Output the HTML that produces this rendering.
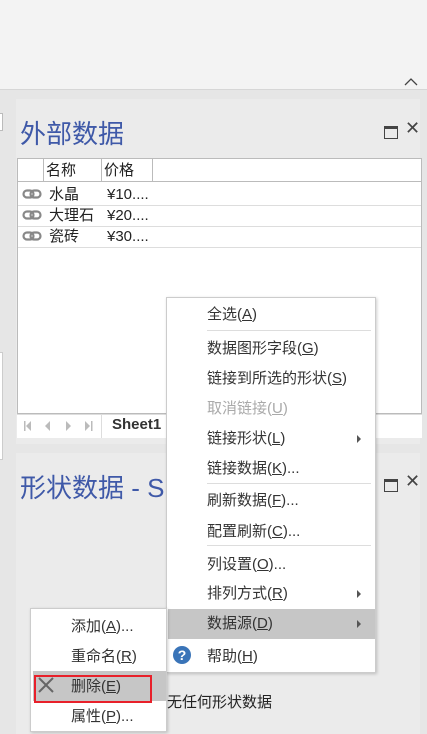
<!DOCTYPE html>
<html><head><meta charset="utf-8"><style>
*{margin:0;padding:0;box-sizing:border-box}
body{width:427px;height:734px;overflow:hidden;background:#e6e6e6;font-family:"Liberation Sans","Noto Sans CJK SC",sans-serif;position:relative;color:#222}
.a{position:absolute}
.t{font-size:15px;white-space:nowrap;line-height:20px}
u{text-decoration:underline}
.sep{position:absolute;left:40px;right:4px;height:1px;background:#ddd}
.arr{position:absolute;left:190px;width:0;height:0;border-left:4px solid #555;border-top:4px solid transparent;border-bottom:4px solid transparent}
</style></head><body>
<div class="a" style="left:0;top:0;width:427px;height:90px;background:#f3f3f3;border-bottom:1px solid #d6d6d6"></div>
<svg class="a" style="left:404px;top:77px" width="14" height="10"><path d="M1 8 L7 2 L13 8" fill="none" stroke="#444" stroke-width="1.3"/></svg>
<div class="a" style="left:0;top:113px;width:3px;height:18px;background:#fff;border:1px solid #bbb;border-left:none"></div>
<div class="a" style="left:0;top:352px;width:3px;height:108px;background:#fff;border:1px solid #ccc;border-left:none"></div>
<div class="a" style="left:16px;top:99px;width:404px;height:345px;background:#ebebeb"></div>
<div class="a" style="left:20px;top:116px;font-size:26px;color:#3f59a8;line-height:36px">外部数据</div>
<div class="a" style="left:384px;top:126px;width:14px;height:13px;border:1.5px solid #444;border-top-width:3px"></div>
<div class="a" style="left:405px;top:118px;font-size:18px;color:#444">✕</div>
<div class="a" style="left:17px;top:158px;width:405px;height:256px;background:#fff;border:1px solid #bbb"></div>
<div class="a" style="left:17px;top:181px;width:405px;height:1px;background:#bbb"></div>
<div class="a" style="left:43px;top:158px;width:1px;height:24px;background:#bbb"></div>
<div class="a" style="left:101px;top:158px;width:1px;height:24px;background:#bbb"></div>
<div class="a" style="left:152px;top:158px;width:1px;height:24px;background:#bbb"></div>
<div class="a t" style="left:46px;top:161px">名称</div>
<div class="a t" style="left:104px;top:161px">价格</div>
<div class="a" style="left:18px;top:205px;width:403px;height:1px;background:#ddd"></div>
<div class="a" style="left:18px;top:226px;width:403px;height:1px;background:#ddd"></div>
<div class="a" style="left:18px;top:247px;width:403px;height:1px;background:#ddd"></div>
<svg class="a" style="left:22px;top:189px" width="20" height="10"><rect x="1.5" y="1.5" width="10" height="7" rx="3.5" fill="none" stroke="#888" stroke-width="2.2"/><rect x="8.5" y="1.5" width="10" height="7" rx="3.5" fill="none" stroke="#888" stroke-width="2.2"/></svg>
<svg class="a" style="left:22px;top:210px" width="20" height="10"><rect x="1.5" y="1.5" width="10" height="7" rx="3.5" fill="none" stroke="#888" stroke-width="2.2"/><rect x="8.5" y="1.5" width="10" height="7" rx="3.5" fill="none" stroke="#888" stroke-width="2.2"/></svg>
<svg class="a" style="left:22px;top:231px" width="20" height="10"><rect x="1.5" y="1.5" width="10" height="7" rx="3.5" fill="none" stroke="#888" stroke-width="2.2"/><rect x="8.5" y="1.5" width="10" height="7" rx="3.5" fill="none" stroke="#888" stroke-width="2.2"/></svg>
<div class="a t" style="left:49px;top:185px">水晶</div><div class="a t" style="left:107px;top:185px">¥10....</div>
<div class="a t" style="left:49px;top:206px">大理石</div><div class="a t" style="left:107px;top:206px">¥20....</div>
<div class="a t" style="left:49px;top:227px">瓷砖</div><div class="a t" style="left:107px;top:227px">¥30....</div>
<div class="a" style="left:17px;top:414px;width:405px;height:24px;background:#fff;border-top:1px solid #ddd"></div>
<div class="a" style="left:101px;top:415px;width:1px;height:23px;background:#ddd"></div>
<svg class="a" style="left:22px;top:420px" width="76" height="12"><g fill="#bbb"><rect x="2" y="1" width="1.5" height="10"/><path d="M9 1L4 6L9 11Z"/><path d="M28 1L23 6L28 11Z"/><path d="M44 1L49 6L44 11Z"/><path d="M63 1L68 6L63 11Z"/><rect x="69" y="1" width="1.5" height="10"/></g></svg>
<div class="a" style="left:112px;top:416px;font-size:15px;font-weight:bold;color:#333">Sheet1</div>
<div class="a" style="left:16px;top:453px;width:404px;height:281px;background:#ebebeb"></div>
<div class="a" style="left:20px;top:470px;font-size:26px;color:#3f59a8;line-height:36px">形状数据 - S</div>
<div class="a" style="left:384px;top:479px;width:14px;height:13px;border:1.5px solid #444;border-top-width:3px"></div>
<div class="a" style="left:405px;top:471px;font-size:18px;color:#444">✕</div>
<div class="a t" style="left:167px;top:693px">无任何形状数据</div>
<div class="a" style="left:166px;top:297px;width:210px;height:376px;background:#fff;border:1px solid #ccc;box-shadow:1px 1px 3px rgba(0,0,0,.2);color:#333">
<div class="a t" style="left:40px;top:7px">全选(<u>A</u>)</div>
<div class="sep" style="top:32px"></div>
<div class="a t" style="left:40px;top:41px">数据图形字段(<u>G</u>)</div>
<div class="a t" style="left:40px;top:71px">链接到所选的形状(<u>S</u>)</div>
<div class="a t" style="left:40px;top:101px;color:#aaa">取消链接(<u>U</u>)</div>
<div class="a t" style="left:40px;top:131px">链接形状(<u>L</u>)</div><div class="arr" style="top:137px"></div>
<div class="a t" style="left:40px;top:161px">链接数据(<u>K</u>)...</div>
<div class="sep" style="top:185px"></div>
<div class="a t" style="left:40px;top:193px">刷新数据(<u>F</u>)...</div>
<div class="a t" style="left:40px;top:224px">配置刷新(<u>C</u>)...</div>
<div class="sep" style="top:247px"></div>
<div class="a t" style="left:40px;top:257px">列设置(<u>O</u>)...</div>
<div class="a t" style="left:40px;top:286px">排列方式(<u>R</u>)</div><div class="arr" style="top:292px"></div>
<div class="a" style="left:1px;top:311px;width:207px;height:30px;background:#c6c6c6"></div>
<div class="a t" style="left:40px;top:316px">数据源(<u>D</u>)</div><div class="arr" style="top:322px"></div>
<div class="a" style="left:6px;top:348px;width:18px;height:18px;border-radius:50%;background:#3a74b8;color:#fff;font-size:14px;font-weight:bold;text-align:center;line-height:18px">?</div>
<div class="a t" style="left:40px;top:349px">帮助(<u>H</u>)</div>
</div>
<div class="a" style="left:30px;top:608px;width:137px;height:124px;background:#fff;border:1px solid #ccc;box-shadow:1px 1px 3px rgba(0,0,0,.2);color:#333">
<div class="a t" style="left:40px;top:8px">添加(<u>A</u>)...</div>
<div class="a t" style="left:40px;top:38px">重命名(<u>R</u>)</div>
<div class="a" style="left:2px;top:62px;width:133px;height:30px;background:#c6c6c6"></div>
<svg class="a" style="left:7px;top:68px" width="16" height="16"><path d="M1 1L15 15M15 1L1 15" stroke="#666" stroke-width="2"/></svg>
<div class="a t" style="left:40px;top:68px">删除(<u>E</u>)</div>
<div class="a" style="left:3px;top:66px;width:118px;height:28px;border:2px solid #e8202a"></div>
<div class="a t" style="left:40px;top:98px">属性(<u>P</u>)...</div>
</div>
</body></html>
